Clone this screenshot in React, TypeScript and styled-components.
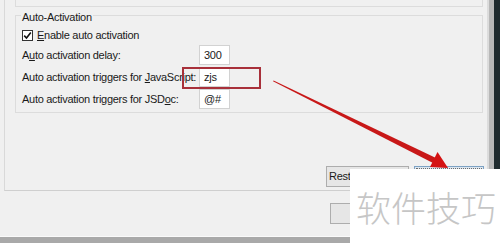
import React from "react";
import styled, { createGlobalStyle } from "styled-components";

const Global = createGlobalStyle`
  html, body { margin: 0; padding: 0; background: #f0f0f0; }
  body { font-family: "Liberation Sans", Arial, sans-serif; }
`;

const Page = styled.div`
  position: relative;
  width: 500px;
  height: 243px;
  overflow: hidden;
  display: flex;
  background: #f0f0f0;
  font-size: 11px;
  letter-spacing: -0.28px;
  color: #1a1a1a;
`;

const Main = styled.div`
  width: 488px;
  display: flex;
  flex-direction: column;
`;

const Pane = styled.div`
  margin-left: 4px;
  width: 484px;
  height: 191px;
  box-sizing: border-box;
  border-left: 1px solid #d9d9d9;
  border-right: 1px solid #dcdcdc;
  border-bottom: 1px solid #cfcfcf;
  padding: 0 4px 0 10px;
  display: flex;
  flex-direction: column;
`;

const TopStub = styled.div`
  height: 7px;
  box-sizing: border-box;
  border: 1px solid #dcdcdc;
  border-top: none;
`;

const Group = styled.div`
  position: relative;
  margin-top: 8px;
  height: 98px;
  box-sizing: border-box;
  border: 1px solid #dcdcdc;
  padding: 11px 0 0 6px;
`;

const Legend = styled.span`
  position: absolute;
  top: -6px;
  left: 5px;
  padding: 0 1px;
  background: #f0f0f0;
  line-height: 14px;
`;

const CheckRow = styled.label`
  display: flex;
  align-items: center;
  gap: 4px;
  height: 16px;
  line-height: 16px;
`;

const Box = styled.span`
  width: 11px;
  height: 11px;
  box-sizing: border-box;
  border: 1px solid #333;
  background: #fff;
  display: flex;
  align-items: center;
  justify-content: center;
`;

const Form = styled.div`
  margin-top: 2px;
  display: grid;
  grid-template-columns: 177px 31px;
  row-gap: 2px;
  align-items: center;
`;

const Label = styled.span`
  line-height: 20px;
  white-space: nowrap;
`;

const Field = styled.div`
  height: 20px;
  box-sizing: border-box;
  border: 1px solid #d2d2d2;
  background: #fff;
  padding-left: 4px;
  line-height: 18px;
`;

const ButtonRow = styled.div`
  margin-top: auto;
  margin-bottom: 3px;
  margin-right: -1px;
  display: flex;
  justify-content: flex-end;
  gap: 5px;
`;

const Button = styled.div<{ $w: number; $focus?: boolean }>`
  width: ${(p) => p.$w}px;
  height: 21px;
  box-sizing: border-box;
  border: 1px solid ${(p) => (p.$focus ? "#7da2c4" : "#adadad")};
  background: ${(p) => (p.$focus ? "#dce6ef" : "#e6e6e6")};
  outline: ${(p) => (p.$focus ? "1px dotted #6d6d6d" : "none")};
  outline-offset: -3px;
  padding: 0 2px;
  text-align: center;
  line-height: 19px;
  white-space: nowrap;
  overflow: hidden;
`;

const Footer = styled.div`
  height: 46px;
  box-sizing: border-box;
  border-bottom: 1px solid #fafafa;
  display: flex;
  justify-content: flex-end;
  align-items: flex-start;
  gap: 6px;
  padding: 12px 2px 0 0;
`;

const BottomBar = styled.div`
  height: 6px;
  background: #a9a9a9;
`;

const Strip = styled.div<{ $c: string; $w: number }>`
  width: ${(p) => p.$w}px;
  background: ${(p) => p.$c};
`;

const RedBox = styled.div`
  position: absolute;
  left: 182px;
  top: 67px;
  width: 79px;
  height: 22px;
  box-sizing: border-box;
  border: 2px solid #a8303a;
`;

const Arrow = styled.svg`
  position: absolute;
  left: 0;
  top: 0;
  width: 500px;
  height: 243px;
  pointer-events: none;
`;

const Watermark = styled.div`
  position: absolute;
  left: 350px;
  top: 169px;
  width: 150px;
  height: 74px;
  background: #fff;
  display: flex;
  align-items: center;
  padding-left: 6px;
  box-sizing: border-box;
  font-family: "Noto Sans CJK SC", sans-serif;
  font-size: 35px;
  font-weight: 300;
  letter-spacing: 0;
  color: #c6c6c6;
  line-height: 1;
`;

export default function App() {
  return (
    <>
      <Global />
      <Page>
        <Main>
          <Pane>
            <TopStub />
            <Group>
              <Legend>Auto-Activation</Legend>
              <CheckRow>
                <Box>
                  <svg width="9" height="9" viewBox="0 0 9 9">
                    <path d="M1.2 4.6 L3.5 7 L7.8 1.5" fill="none" stroke="#111" strokeWidth="1.6" />
                  </svg>
                </Box>
                <span>
                  <u>E</u>nable auto activation
                </span>
              </CheckRow>
              <Form>
                <Label>
                  A<u>u</u>to activation delay:
                </Label>
                <Field>300</Field>
                <Label>
                  Auto activation triggers for <u>J</u>avaScript:
                </Label>
                <Field>zjs</Field>
                <Label>
                  Auto activation triggers for JSD<u>o</u>c:
                </Label>
                <Field>@#</Field>
              </Form>
            </Group>
            <ButtonRow>
              <Button $w={83}>Restore Defaults</Button>
              <Button $w={70} $focus>
                Apply
              </Button>
            </ButtonRow>
          </Pane>
          <Footer>
            <Button $w={75}>OK</Button>
            <Button $w={75}>Cancel</Button>
          </Footer>
          <BottomBar />
        </Main>
        <Strip $c="#dcdcdc" $w={1} />
        <Strip $c="#b8b8b8" $w={5} />
        <Strip $c="#1f2b2e" $w={6} />
        <RedBox />
        <Arrow viewBox="0 0 500 243">
          <polygon points="273,81.3 273.6,80.4 436,158 433,163" fill="#c81818" />
          <polygon points="448,168 430,167 437.5,152" fill="#d41212" />
        </Arrow>
        <Watermark>软件技巧</Watermark>
      </Page>
    </>
  );
}
